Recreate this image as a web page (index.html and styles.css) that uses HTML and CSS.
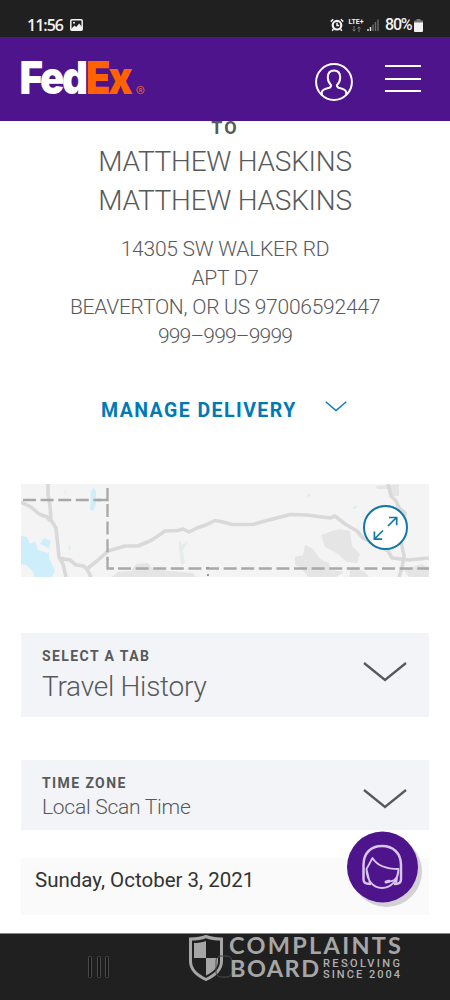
FILE: index.html
```html
<!DOCTYPE html>
<html lang="en">
<head>
<meta charset="utf-8">
<title>FedEx Tracking</title>
<link rel="stylesheet" href="styles.css">
</head>
<body>
<div class="phone">
  <div class="status">
    <div class="status-left">
      <span class="clock">11:56</span>
      <svg class="photo" width="13" height="12" viewBox="0 0 13 12"><rect x=".8" y=".8" width="11.4" height="10.4" rx="1" fill="none" stroke="#f2f2f2" stroke-width="1.5"/><path d="M1 10 4.5 6.5 6.2 8 9.2 4.5 12 8v3H1z" fill="#f2f2f2"/><circle cx="4" cy="3.8" r="1" fill="#f2f2f2"/></svg>
    </div>
    <div class="status-right">
      <svg width="14" height="14" viewBox="0 0 14 14"><circle cx="7" cy="7.2" r="4.3" fill="none" stroke="#f2f2f2" stroke-width="2.2"/><path d="M7 4.8v2.7h2.2M.7 3.6 3.2 1.2M13.3 3.6 10.8 1.2M3.4 11l-1.2 1.8M10.6 11l1.2 1.8" fill="none" stroke="#f2f2f2" stroke-width="1.5"/></svg>
      <div class="lte"><span>LTE+</span><svg width="9" height="6" viewBox="0 0 9 6"><path d="M2 0v5M.5 3.5 2 5.2l1.5-1.7M7 6V1M5.5 2.5 7 .8l1.5 1.7" fill="none" stroke="#777" stroke-width="1"/></svg></div>
      <svg class="signal" width="12" height="12" viewBox="0 0 12 12"><path d="M1 10v2M3.5 8v4" stroke="#eee" stroke-width="1.4"/><path d="M6 5.500v6.500M8.500 3v9M11 .5V12" stroke="#6c6c6c" stroke-width="1.4"/></svg>
      <span class="pct">80%</span>
      <svg class="battery" width="9" height="13" viewBox="0 0 9 13"><path d="M2.500 0h4v1.500H9V4H0V1.500h2.500z" fill="#777"/><path d="M0 3.500h9V12q0 1-1 1H1q-1 0-1-1z" fill="#f2f2f2"/></svg>
    </div>
  </div>

  <header class="header">
    <svg class="logo" width="126" height="50" viewBox="0 0 126 50">
      <text class="logo-text" x="-1.500" y="33.500" textLength="111" lengthAdjust="spacingAndGlyphs"><tspan fill="#fff">Fed</tspan><tspan fill="#ff6200">Ex</tspan></text>
      <circle cx="119.500" cy="30" r="3.700" fill="none" stroke="#e0602c"/>
      <text class="reg" x="117.700" y="32.200">R</text>
    </svg>
    <div class="header-actions">
      <svg width="38" height="38" viewBox="0 0 38 38" fill="none" stroke="#fff" stroke-width="2"><circle cx="19" cy="19" r="17.900"/><path d="M6.800 32v-2.500c0-3 4-3.800 7-4.500 2-.5 2.300-1 2.300-2.700-2-2-3.300-4.600-3.300-7.800 0-4.500 2.400-7 6.200-7s6.200 2.500 6.200 7c0 3.200-1.300 5.800-3.300 7.800 0 1.700.3 2.200 2.300 2.700 3 .7 7 1.500 7 4.500V32"/></svg>
      <div class="burger"><i></i><i></i><i></i></div>
    </div>
  </header>

  <main class="content">
    <h2 class="to">TO</h2>
    <div class="names"><div>MATTHEW HASKINS</div><div>MATTHEW HASKINS</div></div>
    <div class="address"><div>14305 SW WALKER RD</div><div>APT D7</div><div>BEAVERTON, OR US 97006592447</div><div class="tel">999–999–9999</div></div>
    <div class="manage">
      <span>MANAGE DELIVERY</span>
      <svg width="22" height="11" viewBox="0 0 22 11"><path d="M.7.8 11 9.500 21.300.8" fill="none" stroke="#007ab7" stroke-width="1.400"/></svg>
    </div>

    <svg class="map" width="408" height="93" viewBox="0 0 408 93">
      <rect width="408" height="93" fill="#f4f4f4"/>
      <g fill="#cdeefa">
        <path d="M0 52 6 53 9 60 14 57 17 66 27 69 29 65 19 60 23 54 30 57 28 63 28 74 34 87 31 93 14 93 11 86 5 81 0 80z"/>
        <path d="M70 7 73 3 75 8 75 20 72 27 69 26z"/>
        <path d="M42 8 46 5 45 11z" opacity=".4"/>
      </g>
      <g fill="#e5e5e5">
        <path d="M91 93 97 88 110 87 115 80 127 79 132 85 148 87 172 89 175 93z"/>
        <path d="M274 73 282 71 284 61 292 65 299 75 308 79 310 86 323 88 315 93 287 93 281 85 274 81z"/>
        <path d="M312 51 323 47 330 45 341 47 343 62 351 70 348 79 338 78 329 70 316 63z" transform="translate(-12 0)"/>
        <path d="M355 2 378 0 378 12 371 12 367 5 356 5zM330 84 343 87 348 93 328 93zM383 86 400 80 408 83 408 93 388 93z"/>
      </g>
      <path d="M158 56 161 61 167 57 162 66 164 80 160 80 158 66z" fill="#e6ecec"/>
      <path d="m286 9 4 3-3 1zM330 24l7-3-2 4zM47 60l3 3-2 5z" fill="#d9f0ed"/>
      <g fill="none" stroke="#d9d9d9" stroke-width="3.600" stroke-linejoin="round">
        <path d="M27 0v10l2 12 1 14 5 8 3 29 4 7 3 13M0 18l10 5 8 7 8 3 3 4M38 74l11 2 6 5 8 1 4 5 3 6M67 84 76 77 87 67 104 62 117 62 131 56 144 47 157 46.500 162 45 168 48 176 44 186 40.500 194 36.500 202 38 211 40.500 232 40.500 246 36.500 269 30.500 286 31 309 34 314 32 324 40 336 47 342 54 367 67 371 74 388 76 408 74"/>
        <path d="M367 0 370 12 375 17 378 24 384 29 381 41 380 57 383 72 381 84 378 93"/>
      </g>
      <g fill="none" stroke="#a8a8a8" stroke-width="2.300"><g stroke-dasharray="13 4.600"><path d="M2 16H80"/><path d="M86.500 20V76"/><path d="M97 84.500H408"/></g>
      <path d="M76 16h10.500V4M86.500 75v9.500H93"/></g>
      <path d="M185 84h3M186 91h2" stroke="#999" stroke-width="2"/>
      <circle cx="364.500" cy="43.500" r="21.500" fill="#fff" stroke="#1378a5" stroke-width="2"/>
      <path d="M367 42 375.500 33.500M368 33.500h7.700v7.700M362 46.500 353.500 55M353.400 47.500V55.200h7.800" fill="none" stroke="#1378a5" stroke-width="1.700"/>
    </svg>

    <div class="select tab">
      <div><div class="label">SELECT A TAB</div><div class="value">Travel History</div></div>
      <svg width="44" height="22" viewBox="0 0 44 22"><path d="M1 2 22 19 43 2" fill="none" stroke="#58595b" stroke-width="2.300"/></svg>
    </div>
    <div class="select zone">
      <div><div class="label">TIME ZONE</div><div class="value">Local Scan Time</div></div>
      <svg width="44" height="22" viewBox="0 0 44 22"><path d="M1 2 22 19 43 2" fill="none" stroke="#58595b" stroke-width="2.300"/></svg>
    </div>
    <div class="date">Sunday, October 3, 2021</div>
  </main>

  <svg class="chat" width="80" height="80" viewBox="0 0 80 80">
    <circle cx="41.500" cy="41.500" r="35.500" fill="#d3d1d6"/>
    <circle cx="37.500" cy="37" r="35.500" fill="#4d148c"/>
    <g fill="none" stroke="#d9c5ee" stroke-linejoin="round" stroke-linecap="round">
      <path stroke-width="2.500" d="M25 54C20 54 18.500 52.500 18.500 49V35C18.500 23 26 16 37 16S56 23 56 35V49C56 52.500 54.500 54 50 54"/>
      <path stroke-width="1.800" d="M21.500 39C21.500 50 28 58 37 58S53.500 50 53.500 39M21.500 39 27.500 28C32 35.500 41 39 53.500 39M21.500 39 25 54M53.500 39 51 54"/>
      <path stroke-width="1.500" d="M43 51.500C48 51.500 51.500 49 52.500 45"/><path stroke-width="3" d="M41 52 44 51.300"/>
    </g>
  </svg>

  <footer class="nav">
    <svg class="recent" width="24" height="24" viewBox="0 0 24 24"><g fill="#161616" stroke="#4a4a4a"><rect x="1.500" y="1.500" width="3" height="21" rx="1"/><rect x="10.500" y="1.500" width="3" height="21" rx="1"/><rect x="18.500" y="1.500" width="3" height="21" rx="1"/></g></svg>
    <svg class="watermark" width="216" height="50" viewBox="0 0 216 50">
      <path d="M18 2.500C23 4.500 28 5 33.500 5V27C33.500 36 27 41 18 45.500 9 41 2.500 36 2.500 27V5C8 5 13 4.500 18 2.500z" fill="#202020" stroke="#a6a6a6" stroke-width="3"/>
      <path d="M18 7C14 8.500 10 9 6 9V24H18zM18 24H30V27C30 34 25 38 18 41.500z" fill="#a6a6a6"/>
      <rect x="28" y="22" width="16" height="21" rx="5" fill="none" stroke="#4a4a4a"/>
      <path d="m165 24-6 8 8 11" fill="none" stroke="#4a4a4a"/>
      <g class="wm-big"><text x="41" y="20" textLength="172">COMPLAINTS</text><text x="42" y="43" textLength="89">BOARD</text></g>
      <g class="wm-small"><text x="135" y="33" textLength="77">RESOLVING</text><text x="135" y="44" textLength="77">SINCE 2004</text></g>
    </svg>
  </footer>
</div>
</body>
</html>
```
FILE: styles.css
```css
* { box-sizing: border-box; }
body { margin: 0; background: #fff; font-family: Roboto, "Liberation Sans", sans-serif; color: #58595b; }
svg { display: block; flex-shrink: 0; }
.phone { position: relative; width: 450px; height: 1000px; overflow: hidden; display: flex; flex-direction: column; background: #fff; }

.status { height: 37px; flex-shrink: 0; background: #202020; color: #f2f2f2; display: flex; justify-content: space-between; padding: 13px 27px 0 27px; }
.status-left, .status-right { display: flex; align-items: center; height: 24px; }
.clock { font: 600 16px/24px "Open Sans", Roboto, sans-serif; letter-spacing: -1px; width: 36px; white-space: nowrap; }
.photo { margin-left: 7px; }
.lte { display: flex; flex-direction: column; align-items: center; margin-left: 4px; width: 16px; font: 700 7px/8px Roboto, sans-serif; }
.signal { margin-left: 3px; }
.pct { font: 500 16px/24px Roboto, sans-serif; letter-spacing: -1.200px; margin-left: 6px; width: 26px; white-space: nowrap; }
.battery { margin-left: 3px; }

.header { position: relative; z-index: 1; height: 84px; flex-shrink: 0; background: #4d148c; display: flex; justify-content: space-between; padding: 23px 29px 0 21px; }
.logo { overflow: visible; }
.logo-text { font: 900 45px Inter, "Open Sans", sans-serif; letter-spacing: -2.500px; }
.reg { font: 700 5.500px Roboto, sans-serif; fill: #e0602c; }
.header-actions { display: flex; gap: 32px; padding-top: 3px; }
.burger { display: flex; flex-direction: column; gap: 10.500px; width: 36px; padding-top: 2px; }
.burger i { height: 2px; background: #fff; }

.content { flex: 1; padding: 0 21px; }
.to { margin: -5px 0 2px; font-size: 18px; line-height: 24px; font-weight: 700; letter-spacing: 2.200px; text-align: center; }
.names { font-weight: 300; font-size: 28px; line-height: 39px; letter-spacing: -.25px; text-align: center; }
.address { padding-top: 15px; font-weight: 300; font-size: 21px; line-height: 29px; letter-spacing: -.25px; text-align: center; }
.tel { letter-spacing: -.8px; }
.manage { display: flex; gap: 28px; height: 24px; margin-top: 47px; padding-left: 80px; color: #007ab7; font-size: 19.500px; line-height: 25px; font-weight: 700; letter-spacing: 1.450px; }
.manage svg { margin-top: 3px; }
.map { margin-top: 62px; }

.select { display: flex; justify-content: space-between; background: #f2f4f8; padding-left: 21px; padding-right: 22px; }
.label { font-size: 14px; line-height: 18px; font-weight: 700; letter-spacing: 1.400px; }
.value { font-weight: 300; white-space: nowrap; letter-spacing: -.25px; }
.tab { margin-top: 56px; height: 84px; padding-top: 14px; }
.tab .value { font-size: 28px; line-height: 34px; margin-top: 5px; }
.tab svg { margin-top: 14px; }
.zone { margin-top: 43px; height: 70px; padding-top: 14px; }
.zone .value { font-size: 21px; line-height: 28px; margin-top: 1px; }
.zone svg { margin-top: 14px; }
.date { margin-top: 28px; height: 57px; background: #fafafa; padding: 7px 0 0 14px; color: #333; font-size: 20.500px; line-height: 30px; }

.chat { position: absolute; left: 345px; top: 830px; }
.nav { height: 67px; flex-shrink: 0; background: #202020; border-top: 1px solid #858585; display: flex; }
.recent { margin: 21px 0 0 87px; }
.watermark { margin: 0 0 0 77px; overflow: visible; }
.wm-big { font: 700 23.500px Lato, sans-serif; fill: #a6a6a6; }
.wm-small { font: 500 11px Roboto, sans-serif; fill: #b0b0b0; }
```
